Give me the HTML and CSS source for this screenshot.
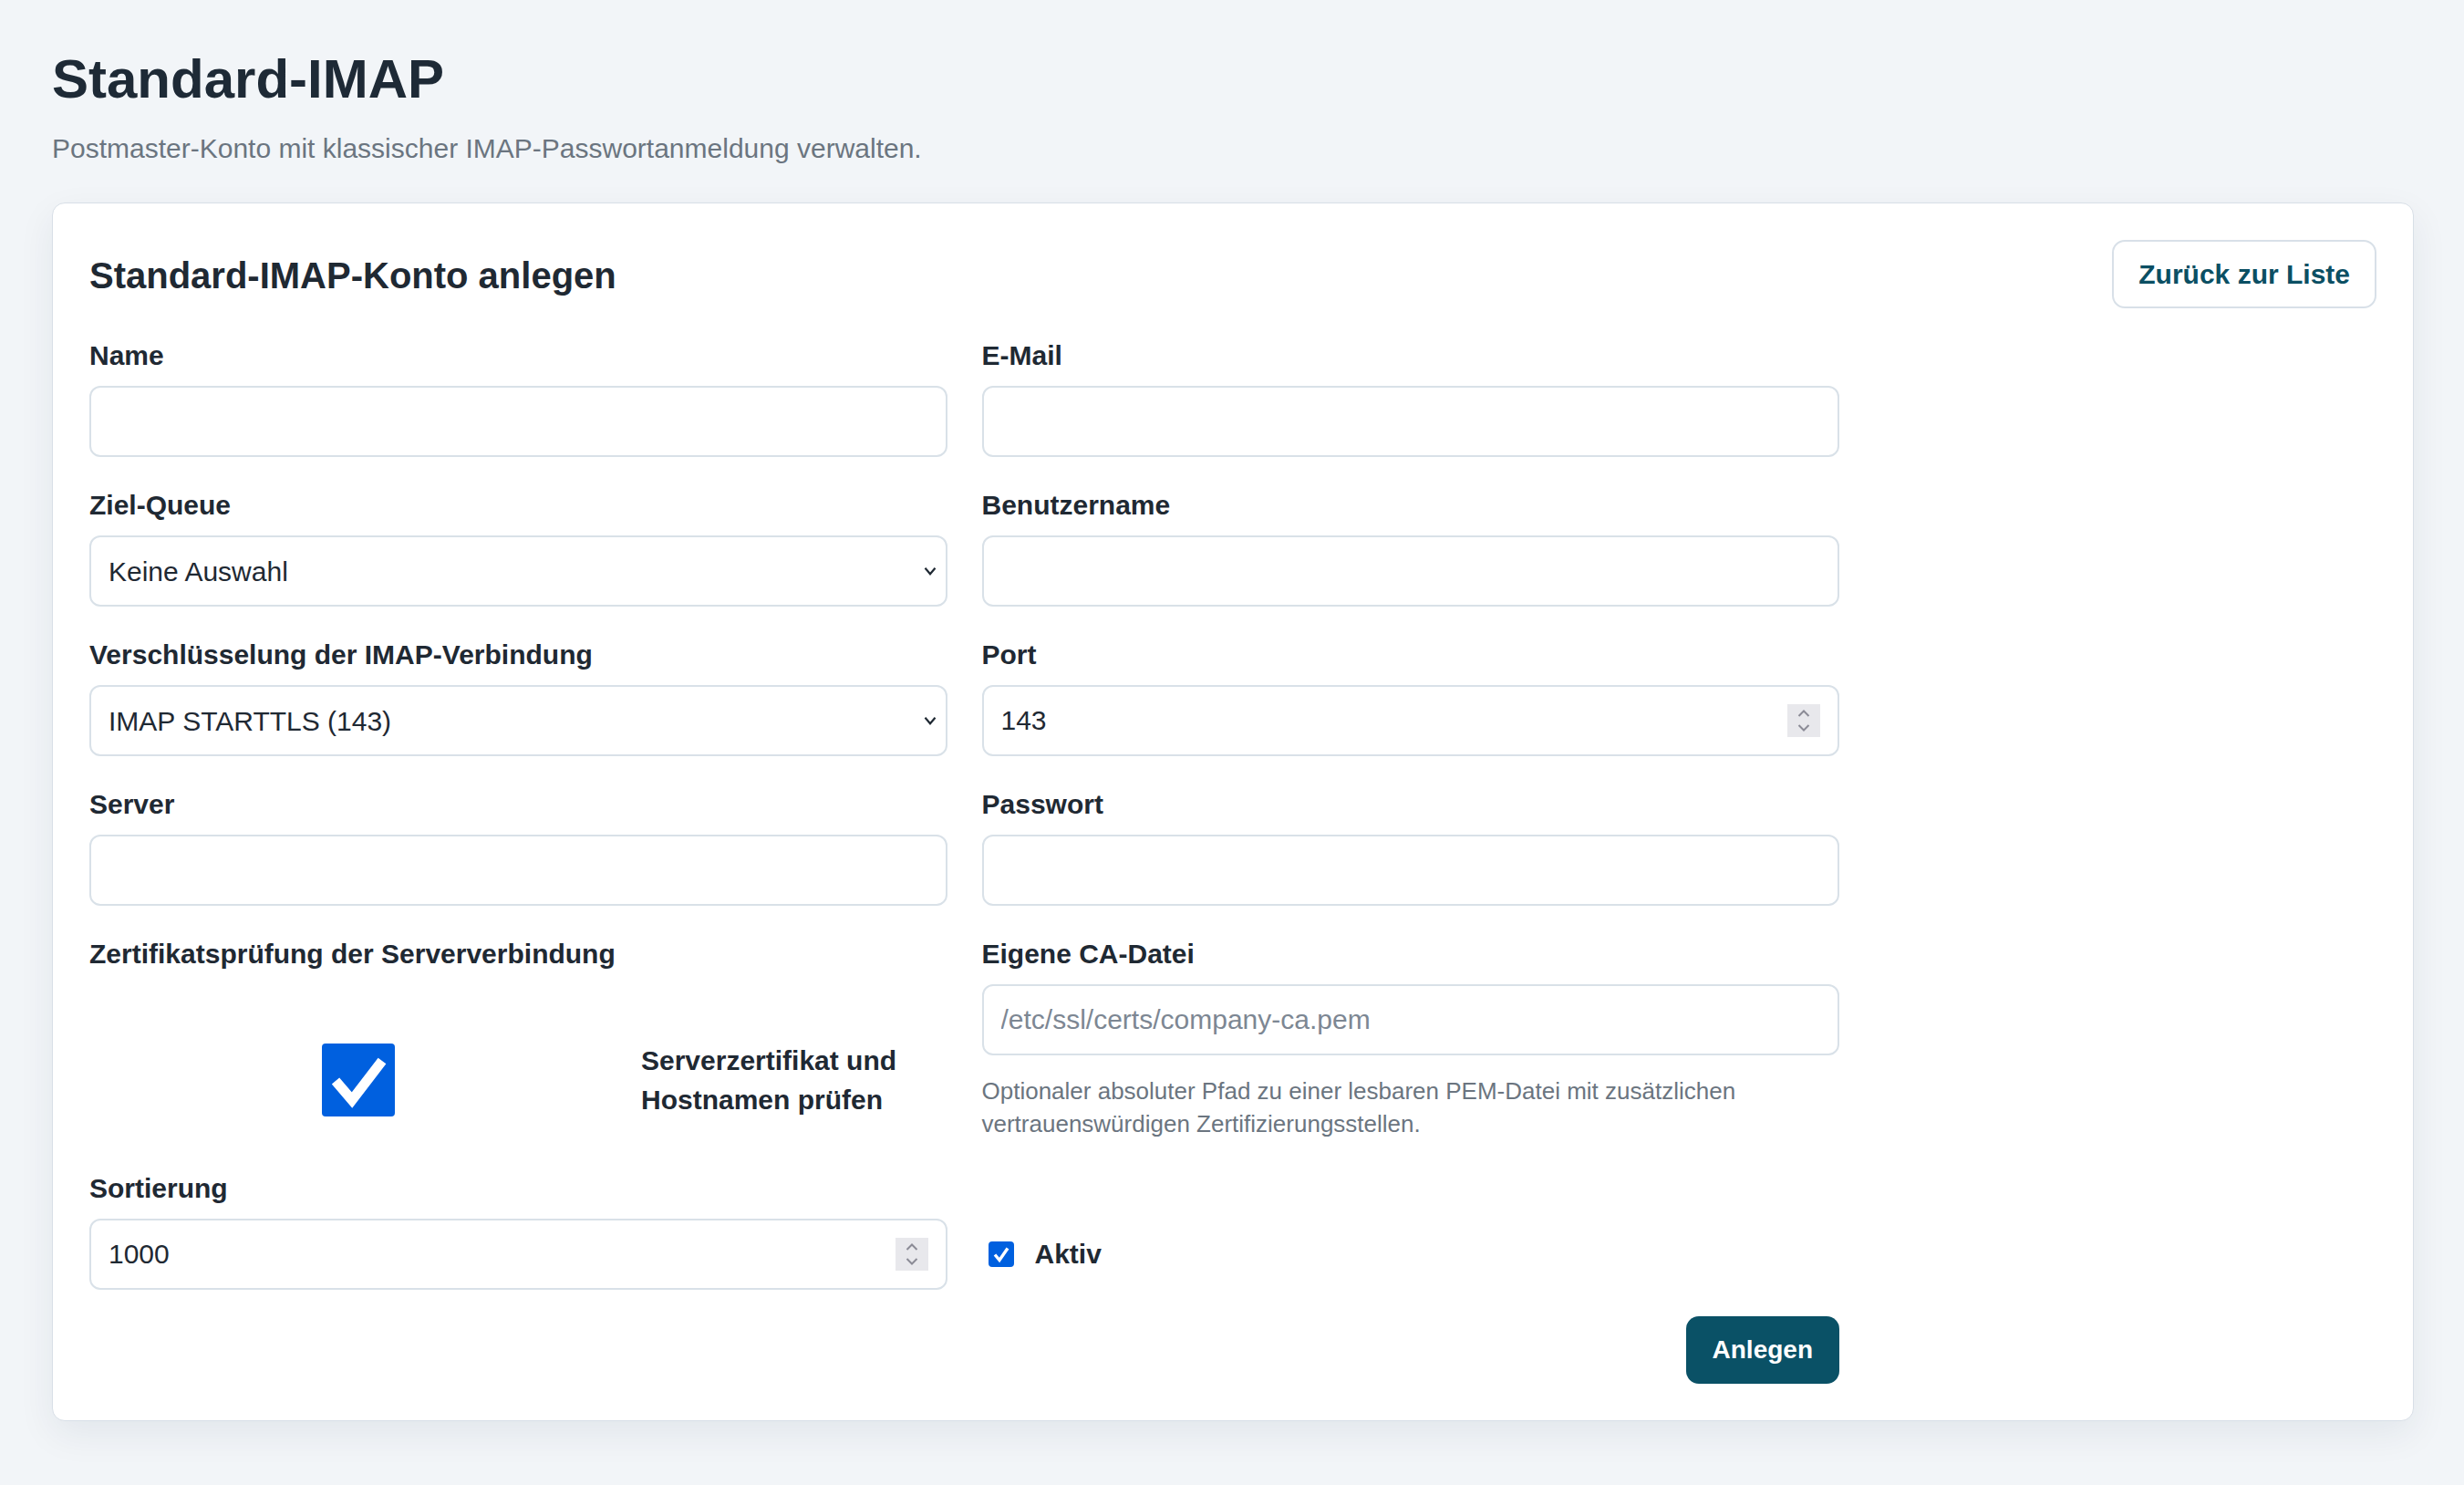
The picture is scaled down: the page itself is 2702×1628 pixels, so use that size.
FILE: index.html
```html
<!DOCTYPE html>
<html lang="de">
<head>
<meta charset="utf-8">
<title>Standard-IMAP</title>
<link rel="stylesheet" href="styles.css">
</head>
<body>
<main class="page">
  <header class="page-head">
    <h1 class="page-title">Standard-IMAP</h1>
    <p class="page-sub">Postmaster-Konto mit klassischer IMAP-Passwortanmeldung verwalten.</p>
  </header>

  <section class="card">
    <div class="card-head">
      <h2 class="card-title">Standard-IMAP-Konto anlegen</h2>
      <a class="btn-outline" href="#">Zurück zur Liste</a>
    </div>

    <form class="form">
      <div class="grid">
        <div class="field">
          <label class="label" for="f-name">Name</label>
          <input class="input" id="f-name" type="text">
        </div>
        <div class="field">
          <label class="label" for="f-mail">E-Mail</label>
          <input class="input" id="f-mail" type="email">
        </div>

        <div class="field">
          <label class="label" for="f-queue">Ziel-Queue</label>
          <div class="select-wrap">
            <select class="input select" id="f-queue">
              <option>Keine Auswahl</option>
            </select>
            <svg class="chev" viewBox="0 0 14 10" aria-hidden="true"><path d="M1.5 1.8 L7 8.2 L12.5 1.8" fill="none" stroke="#1f2933" stroke-width="2.2"/></svg>
          </div>
        </div>
        <div class="field">
          <label class="label" for="f-user">Benutzername</label>
          <input class="input" id="f-user" type="text">
        </div>

        <div class="field">
          <label class="label" for="f-enc">Verschlüsselung der IMAP-Verbindung</label>
          <div class="select-wrap">
            <select class="input select" id="f-enc">
              <option>IMAP STARTTLS (143)</option>
            </select>
            <svg class="chev" viewBox="0 0 14 10" aria-hidden="true"><path d="M1.5 1.8 L7 8.2 L12.5 1.8" fill="none" stroke="#1f2933" stroke-width="2.2"/></svg>
          </div>
        </div>
        <div class="field">
          <label class="label" for="f-port">Port</label>
          <div class="num-wrap">
            <input class="input num" id="f-port" type="number" value="143">
            <span class="spin" aria-hidden="true">
              <svg viewBox="0 0 14 8"><path d="M1.5 7 L7 1.5 L12.5 7" fill="none" stroke="#8b8b96" stroke-width="2"/></svg>
              <svg viewBox="0 0 14 8"><path d="M1.5 1 L7 6.5 L12.5 1" fill="none" stroke="#8b8b96" stroke-width="2"/></svg>
            </span>
          </div>
        </div>

        <div class="field">
          <label class="label" for="f-server">Server</label>
          <input class="input" id="f-server" type="text">
        </div>
        <div class="field">
          <label class="label" for="f-pass">Passwort</label>
          <input class="input" id="f-pass" type="password">
        </div>

        <div class="field">
          <span class="label">Zertifikatsprüfung der Serververbindung</span>
          <label class="check-row">
            <span class="bigcheck-cell">
              <input class="sr" type="checkbox" checked>
              <span class="box box-lg">
                <svg viewBox="0 0 80 80" aria-hidden="true"><path d="M15 41 L33 62 L66 19" fill="none" stroke="#fff" stroke-width="11" stroke-linejoin="miter"/></svg>
              </span>
            </span>
            <span class="check-label">Serverzertifikat und Hostnamen prüfen</span>
          </label>
        </div>
        <div class="field">
          <label class="label" for="f-ca">Eigene CA-Datei</label>
          <input class="input" id="f-ca" type="text" placeholder="/etc/ssl/certs/company-ca.pem">
          <p class="help">Optionaler absoluter Pfad zu einer lesbaren PEM-Datei mit zusätzlichen vertrauenswürdigen Zertifizierungsstellen.</p>
        </div>

        <div class="field">
          <label class="label" for="f-sort">Sortierung</label>
          <div class="num-wrap">
            <input class="input num" id="f-sort" type="number" value="1000">
            <span class="spin" aria-hidden="true">
              <svg viewBox="0 0 14 8"><path d="M1.5 7 L7 1.5 L12.5 7" fill="none" stroke="#8b8b96" stroke-width="2"/></svg>
              <svg viewBox="0 0 14 8"><path d="M1.5 1 L7 6.5 L12.5 1" fill="none" stroke="#8b8b96" stroke-width="2"/></svg>
            </span>
          </div>
        </div>
        <div class="field field-end">
          <label class="inline-check">
            <input class="sr" type="checkbox" checked>
            <span class="box box-sm">
              <svg viewBox="0 0 28 28" aria-hidden="true"><path d="M7 14.5 L12 20.5 L21 7.5" fill="none" stroke="#fff" stroke-width="3.4"/></svg>
            </span>
            <span class="inline-label">Aktiv</span>
          </label>
        </div>
      </div>

      <div class="actions">
        <button class="btn-primary" type="button">Anlegen</button>
      </div>
    </form>
  </section>
</main>
</body>
</html>
```

FILE: styles.css
```css
* { box-sizing: border-box; }

html, body {
  margin: 0;
  background: #f2f5f8;
}

body {
  font-family: "Liberation Sans", Arial, sans-serif;
  color: #1f2933;
}

.page {
  padding: 51px 55px 60px 57px;
}

.page-title {
  margin: 0;
  font-size: 60px;
  line-height: 72px;
  font-weight: 700;
  color: #1e2a36;
}

.page-sub {
  margin: 19px 0 0;
  font-size: 30px;
  line-height: 42px;
  color: #6b7580;
}

.card {
  margin-top: 38px;
  background: #ffffff;
  border: 1.5px solid #d8dfe7;
  border-radius: 14px;
  padding: 40px 40px 40px 40px;
  box-shadow: 0 14px 40px rgba(20, 40, 70, 0.07);
}

.card-head {
  display: flex;
  justify-content: space-between;
  align-items: center;
}

.card-title {
  margin: 0;
  font-size: 40px;
  line-height: 48px;
  font-weight: 700;
  color: #1f2933;
  position: relative;
  top: 1px;
}

.btn-outline {
  display: inline-flex;
  align-items: center;
  height: 75px;
  padding: 0 27px;
  border: 2px solid #d8e0e8;
  border-radius: 14px;
  background: #fff;
  font-size: 30px;
  font-weight: 700;
  color: #0b4f63;
  text-decoration: none;
}

.form {
  width: 1919px;
  margin-top: 34px;
}

.grid {
  display: grid;
  grid-template-columns: 1fr 1fr;
  column-gap: 38px;
  row-gap: 35px;
}

.field {
  display: flex;
  flex-direction: column;
  min-width: 0;
}

.field-end {
  justify-content: flex-end;
}

.label {
  display: block;
  font-size: 30px;
  line-height: 36px;
  font-weight: 700;
  color: #1f2933;
  margin-bottom: 15px;
}

.input {
  display: block;
  width: 100%;
  height: 78px;
  border: 2px solid #d9e1e8;
  border-radius: 12px;
  padding: 0 19px;
  background: #fff;
  font-family: "Liberation Sans", Arial, sans-serif;
  font-size: 30px;
  color: #1f2933;
  outline: none;
}

.input::placeholder {
  color: #7d8793;
}

.select {
  -webkit-appearance: none;
  appearance: none;
  padding-right: 48px;
}

.select-wrap,
.num-wrap {
  position: relative;
}

.chev {
  position: absolute;
  right: 12px;
  top: 50%;
  width: 14px;
  height: 10px;
  margin-top: -5px;
  pointer-events: none;
}

.num {
  -moz-appearance: textfield;
  appearance: textfield;
}

.num::-webkit-inner-spin-button,
.num::-webkit-outer-spin-button {
  -webkit-appearance: none;
  margin: 0;
}

.spin {
  position: absolute;
  right: 21px;
  top: 50%;
  width: 36px;
  height: 36px;
  margin-top: -18px;
  background: #e8e8ec;
  display: flex;
  flex-direction: column;
  align-items: center;
  justify-content: center;
  gap: 8px;
  pointer-events: none;
}

.spin svg {
  width: 14px;
  height: 8px;
  display: block;
}

.sr {
  position: absolute;
  width: 1px;
  height: 1px;
  opacity: 0;
  margin: 0;
  pointer-events: none;
}

.box {
  display: inline-flex;
  align-items: center;
  justify-content: center;
  background: #0060df;
  flex: none;
}

.box svg {
  display: block;
  width: 100%;
  height: 100%;
}

.box-lg {
  width: 80px;
  height: 80px;
  border-radius: 4px;
}

.box-sm {
  width: 28px;
  height: 28px;
  border-radius: 4px;
}

.check-row {
  display: flex;
  align-items: center;
  margin-top: 62px;
  cursor: pointer;
}

.bigcheck-cell {
  position: relative;
  flex: 0 0 590px;
  display: flex;
  justify-content: center;
}

.check-label {
  flex: 1;
  margin-left: 15px;
  font-size: 30px;
  line-height: 43px;
  font-weight: 700;
  color: #1f2933;
}

.help {
  margin: 21px 0 0;
  font-size: 26px;
  line-height: 36px;
  color: #6b7580;
}

.inline-check {
  position: relative;
  display: flex;
  align-items: center;
  height: 78px;
  padding-left: 7px;
  cursor: pointer;
}

.inline-label {
  margin-left: 23px;
  font-size: 30px;
  font-weight: 700;
  color: #1f2933;
}

.actions {
  display: flex;
  justify-content: flex-end;
  margin-top: 29px;
}

.btn-primary {
  height: 74px;
  padding: 0 29px;
  border: 0;
  border-radius: 14px;
  background: #0a5166;
  color: #ffffff;
  font-family: "Liberation Sans", Arial, sans-serif;
  font-size: 28px;
  font-weight: 700;
  cursor: pointer;
}
```
